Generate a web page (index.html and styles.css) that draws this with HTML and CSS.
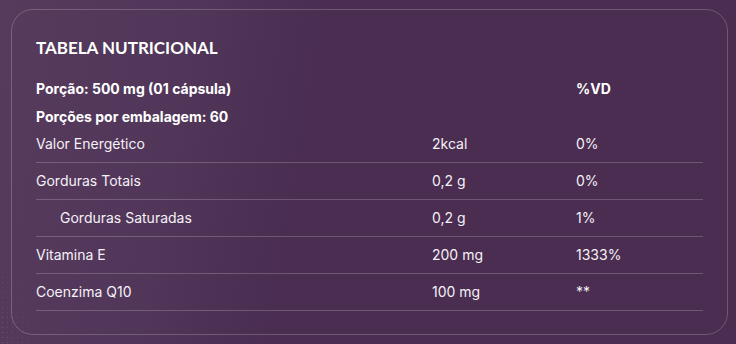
FILE: index.html
```html
<!DOCTYPE html>
<html lang="pt-BR">
<head>
<meta charset="utf-8">
<title>Tabela Nutricional</title>
<link rel="stylesheet" href="styles.css">
</head>
<body>
<div class="page">
  <div class="dots"></div>
  <section class="card">
    <h2 class="title">TABELA NUTRICIONAL</h2>
    <div class="table">
      <div class="row head">
        <span class="c1">Porção: 500 mg (01 cápsula)</span><span class="c2"></span><span class="c3">%VD</span>
      </div>
      <div class="row head">
        <span class="c1">Porções por embalagem: 60</span><span class="c2"></span><span class="c3"></span>
      </div>
      <div class="row data first">
        <span class="c1">Valor Energético</span><span class="c2">2kcal</span><span class="c3">0%</span>
      </div>
      <div class="row data">
        <span class="c1">Gorduras Totais</span><span class="c2">0,2 g</span><span class="c3">0%</span>
      </div>
      <div class="row data">
        <span class="c1 indent">Gorduras Saturadas</span><span class="c2">0,2 g</span><span class="c3">1%</span>
      </div>
      <div class="row data">
        <span class="c1">Vitamina E</span><span class="c2">200 mg</span><span class="c3">1333%</span>
      </div>
      <div class="row data">
        <span class="c1">Coenzima Q10</span><span class="c2">100 mg</span><span class="c3">**</span>
      </div>
    </div>
  </section>
</div>
</body>
</html>
```
FILE: styles.css
```css
* { box-sizing: border-box; }
html, body {
  margin: 0;
  padding: 0;
}
body {
  width: 736px;
  height: 344px;
  overflow: hidden;
  background: linear-gradient(100deg, #563b5c 0%, #51365a 25%, #4a2d51 42%, #4a2d50 100%);
  font-family: Inter, "Noto Sans", sans-serif;
  color: #f5f1f7;
}
.page {
  position: relative;
  padding: 9px 8px 0 11px;
}
.dots {
  position: absolute;
  left: 0;
  bottom: -20px;
  width: 40px;
  height: 110px;
  background-image: radial-gradient(circle, rgba(255,255,255,0.12) 0.7px, transparent 1px);
  background-size: 5px 5px;
  -webkit-mask-image: radial-gradient(ellipse at 0% 100%, #000 20%, transparent 70%);
  mask-image: radial-gradient(ellipse at 0% 100%, #000 20%, transparent 70%);
}
.card {
  position: relative;
  width: 717px;
  height: 326px;
  border: 1px solid rgba(255, 255, 255, 0.2);
  border-radius: 22px;
  padding: 27px 24px 0 24px;
}
.title {
  margin: 0 0 13px 0;
  font-family: Lato, "Open Sans", sans-serif;
  font-weight: 700;
  font-size: 17px;
  line-height: 21px;
  color: #ffffff;
}
.table {
  display: flex;
  flex-direction: column;
}
.row {
  display: grid;
  grid-template-columns: 396px 144px 1fr;
  font-size: 14px;
  line-height: 20px;
}
.row.head {
  padding-top: 8px;
  font-weight: 700;
  color: #ffffff;
}
.row.data {
  padding: 8px 0;
  border-bottom: 1px solid rgba(255, 255, 255, 0.2);
  font-weight: 400;
}
.row.data.first {
  padding-top: 7px;
}
.indent { padding-left: 24px; }
```
